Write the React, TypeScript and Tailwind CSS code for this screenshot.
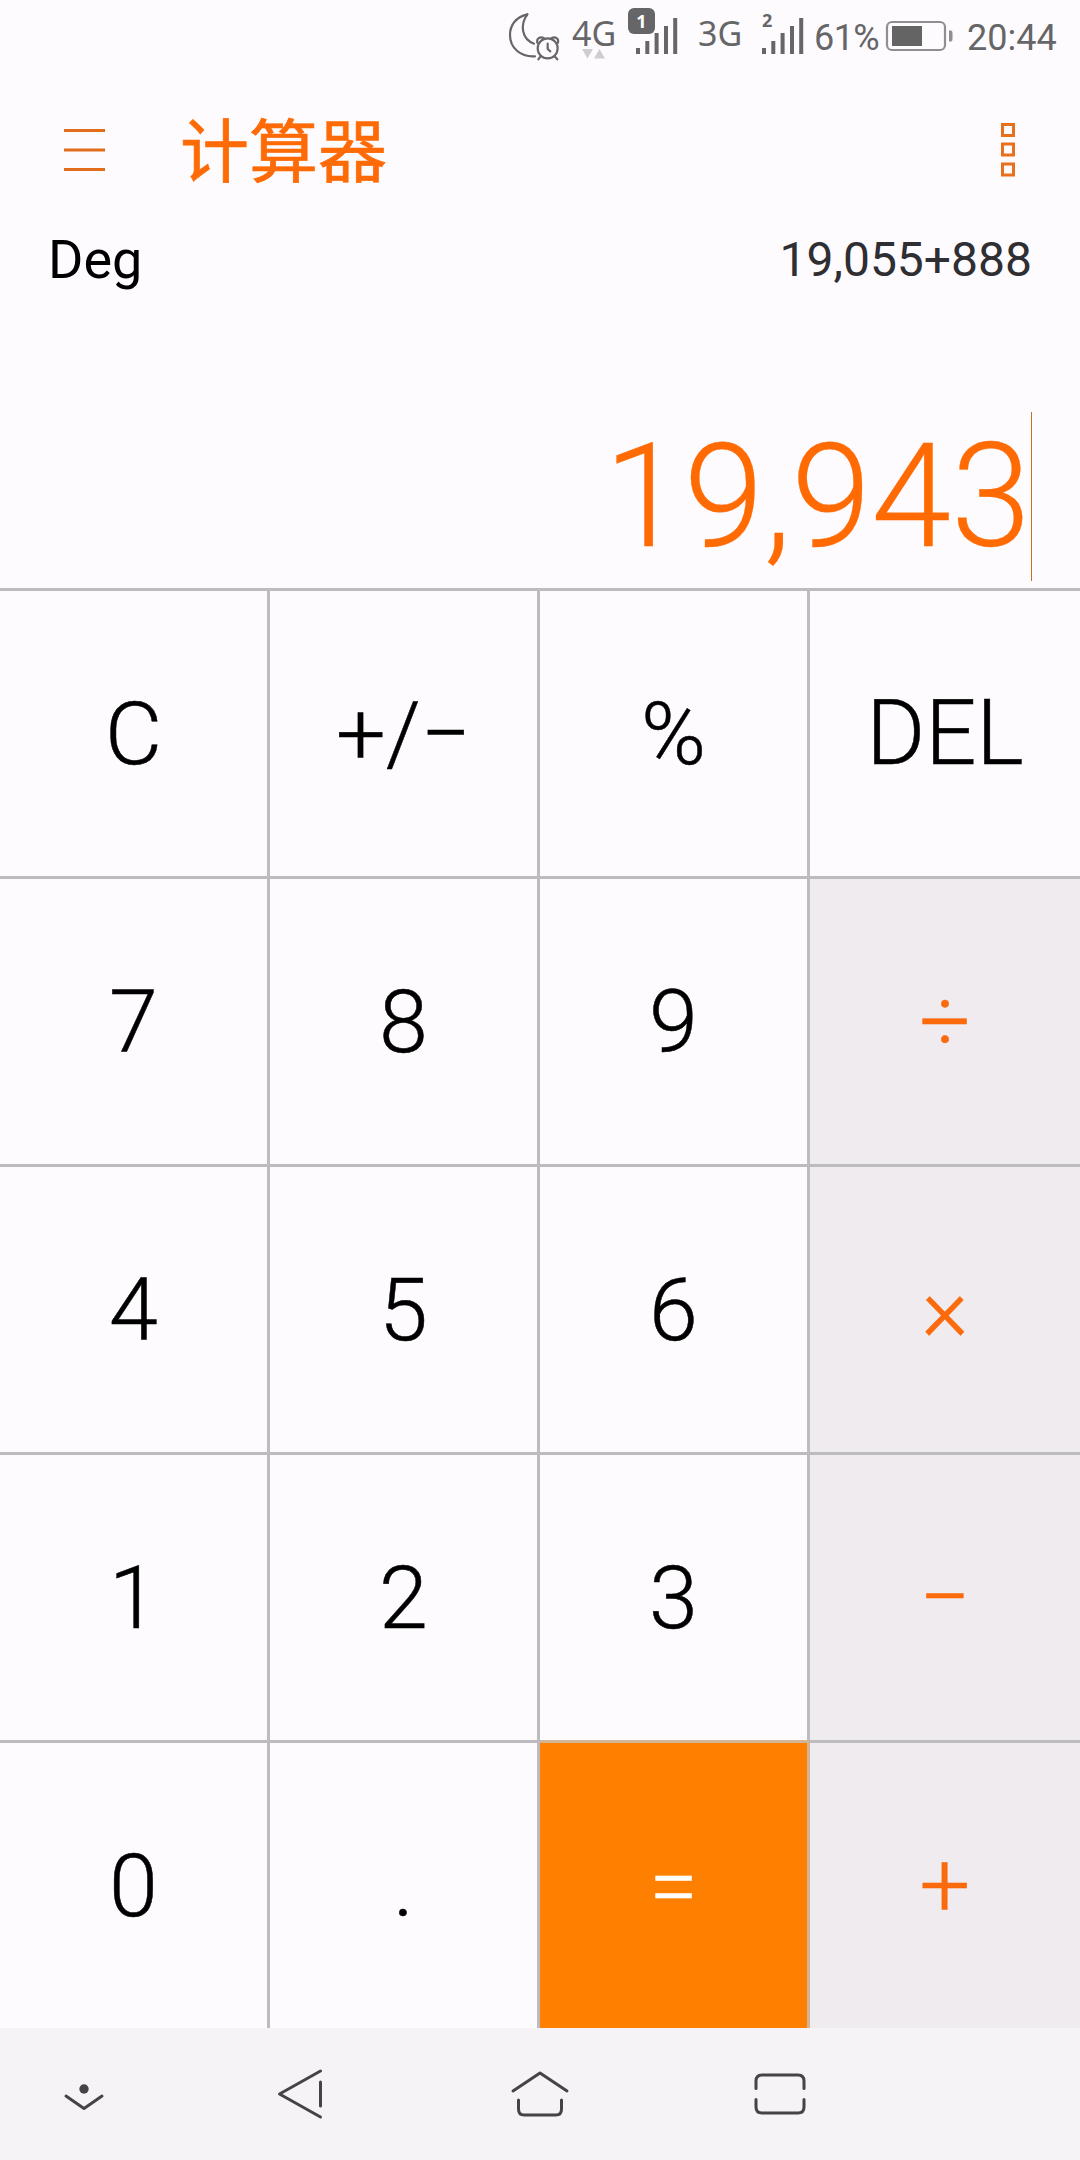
import React from "react";
import clsx from "clsx";

type KeyDef = {
  label: string;
  kind?: "operator" | "equals";
  large?: boolean;
};

const KEYS: KeyDef[] = [
  { label: "C" },
  { label: "+/−" },
  { label: "%" },
  { label: "DEL", large: true },
  { label: "7" },
  { label: "8" },
  { label: "9" },
  { label: "÷", kind: "operator", large: true },
  { label: "4" },
  { label: "5" },
  { label: "6" },
  { label: "×", kind: "operator", large: true },
  { label: "1" },
  { label: "2" },
  { label: "3" },
  { label: "−", kind: "operator", large: true },
  { label: "0" },
  { label: "." },
  { label: "=", kind: "equals" },
  { label: "+", kind: "operator", large: true },
];

function MoonAlarmIcon() {
  return (
    <svg className="h-[70px] w-[56px]" viewBox="50 0 168 210" fill="none" stroke="#666567" strokeWidth="6.5" strokeLinecap="round" strokeLinejoin="round">
      <path d="M111 43C76 51 59 76 59 105C59 145 92 172 134 169" />
      <path d="M111 43C88 75 94 117 131 131" />
      <circle cx="172" cy="145" r="30" />
      <path d="M172 131V147L180 154" />
      <path d="M141 128C138 116 149 109 160 114M203 128C206 116 195 109 184 114" />
      <path d="M150 170L144 178M194 170L201 178" />
    </svg>
  );
}

function SignalBars() {
  return (
    <svg className="h-[36px] w-[42px]" viewBox="0 0 42 36" fill="#666567">
      <rect x="0" y="30" width="4" height="6" />
      <rect x="9.3" y="23" width="4" height="13" />
      <rect x="18.6" y="15" width="4" height="21" />
      <rect x="28" y="8" width="4" height="28" />
      <rect x="37.2" y="0" width="4" height="36" />
    </svg>
  );
}

function StatusBar() {
  return (
    <header className="flex h-[75px] items-start pl-[507px] text-[#666567]">
      <MoonAlarmIcon />
      <div className="ml-[9px] flex w-[45px] flex-col pt-[19px] font-['Noto_Sans'] text-[34px] leading-[28px]">
        4G
        <svg className="mt-[2px] ml-[10px] h-[10px] w-[24px]" viewBox="0 0 24 10" fill="#d0cdd2">
          <path d="M0 0H11L5.5 9.5ZM12 9.5L17.5 0L23 9.5Z" />
        </svg>
      </div>
      <div className="relative ml-[19px] pt-[18px]">
        <SignalBars />
        <span className="absolute top-[8px] -left-[8px] flex h-[26px] w-[27px] items-center justify-center rounded-[6px] bg-[#666567] font-['Noto_Sans'] text-[18px] leading-none font-bold text-white">
          1
        </span>
      </div>
      <div className="ml-[20px] w-[46px] pt-[19px] font-['Noto_Sans'] text-[34px] leading-[28px]">3G</div>
      <div className="relative ml-[18px] pt-[18px]">
        <SignalBars />
        <span className="absolute top-[11px] left-0 font-['Noto_Sans'] text-[18px] leading-none font-bold">2</span>
      </div>
      <span className="ml-[10px] w-[71px] pt-[17px] text-[36px] leading-[42px] tracking-[-0.6px]">61%</span>
      <svg className="mt-[20px] h-[32px] w-[68px]" viewBox="0 0 68 32" fill="none">
        <rect x="2" y="2" width="58" height="28" rx="5" stroke="#8f8e91" strokeWidth="2.2" />
        <rect x="7" y="6" width="30" height="20" fill="#636463" />
        <path d="M64 10.500H66Q67.500 10.500 67.500 13V19Q67.500 21.500 66 21.500H64Z" fill="#8f8e91" />
      </svg>
      <span className="ml-[14px] pt-[17px] text-[36px] leading-[42px]">20:44</span>
    </header>
  );
}

function TitleBar() {
  return (
    <div className="flex h-[150px] items-center pr-[65px] pl-[64px] text-[#fe6b06]">
      <svg className="h-[44px] w-[41px]" viewBox="0 0 41 44" fill="#e06c1c">
        <path d="M0 1H41V4H0ZM0 20.500H41V23.500H0ZM0 40H41V43H0Z" />
      </svg>
      <h1 className="ml-[75px] pt-[7px] text-[69px] leading-[80px] font-normal [-webkit-text-stroke:0.7px_#fe6b06]">计算器</h1>
      <svg className="ml-auto h-[56px] w-[14px]" viewBox="0 0 14 56" fill="none" stroke="#e8701a" strokeWidth="3">
        <rect x="1.500" y="2.500" width="11" height="11" />
        <rect x="1.500" y="22" width="11" height="11" />
        <rect x="1.500" y="42" width="11" height="11" />
      </svg>
    </div>
  );
}

function Display() {
  return (
    <section className="flex h-[363px] flex-col pr-[48px] pl-[48px]">
      <div className="flex h-[68px] items-start justify-between">
        <span className="pt-[1px] text-[54px] leading-[67px] text-black">Deg</span>
        <span className="pt-[5px] text-[48px] leading-[60px] text-[#2f2e33]">19,055+888</span>
      </div>
      <div className="mt-[119px] flex justify-end">
        <span className="border-r border-[#c07028] text-[144px] leading-[169px] font-light text-[#ff6a03] [-webkit-text-stroke:0.3px_#ff6a03]">
          19,943
        </span>
      </div>
    </section>
  );
}

function Key({ label, kind, large }: KeyDef) {
  return (
    <button
      className={clsx(
        "flex items-center justify-center border-t-[3px] border-r-[3px] leading-[106px] font-light nth-[4n]:border-r-0",
        "[-webkit-text-stroke:0.5px_currentColor]",
        large ? "text-[90px]" : "pt-[1px] text-[88px]",
        kind === "equals" && "border-[#d2b596] bg-[#ff8000] text-white",
        kind === "operator" && "border-[#bdbbbf] bg-[#efebee] text-[#fb6a0c]",
        !kind && "border-[#bdbbbf] text-black",
      )}
    >
      {label}
    </button>
  );
}

function NavBar() {
  return (
    <nav className="h-[132px] bg-[#f6f3f7]">
      <svg className="h-[132px] w-[1080px]" viewBox="0 18 1080 132" fill="none" stroke="#444346" strokeWidth="3" strokeLinecap="round" strokeLinejoin="round">
        <circle cx="84" cy="79" r="4.700" fill="#444346" stroke="none" />
        <path d="M66 86L84 98.500L102 86" />
        <path d="M320.500 61L279.500 84L320.500 107M320.500 72V96" />
        <path d="M513 81L540 63L567 81M518.500 90V99Q518.500 105 524 105H556Q561.500 105 561.500 99V90" />
        <path d="M756 78.500V71Q756 65 762 65H798Q804 65 804 71V78.500M756 89.500V97Q756 103 762 103H798Q804 103 804 97V89.500" />
      </svg>
    </nav>
  );
}

export default function App() {
  return (
    <div className="flex h-[2160px] w-[1080px] flex-col overflow-hidden bg-[#fefbff] font-[Roboto,'Noto_Sans_CJK_SC',sans-serif]">
      <StatusBar />
      <TitleBar />
      <Display />
      <main className="grid h-[1440px] grid-cols-4 grid-rows-5">
        {KEYS.map((key) => (
          <Key key={key.label} {...key} />
        ))}
      </main>
      <NavBar />
    </div>
  );
}
